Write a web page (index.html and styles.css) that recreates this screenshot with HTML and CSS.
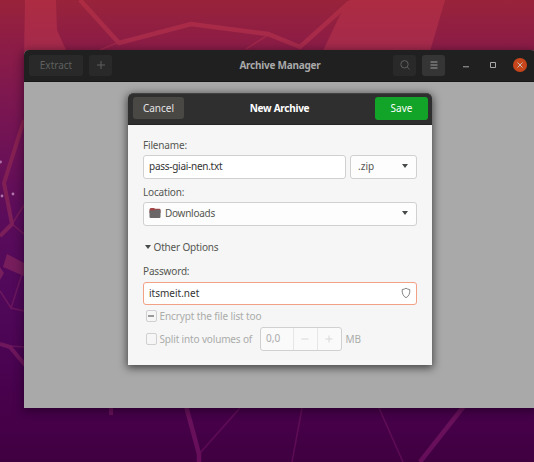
FILE: index.html
```
<!DOCTYPE html>
<html lang="en">
<head>
<meta charset="utf-8">
<title>Archive Manager</title>
<link rel="stylesheet" href="styles.css">
</head>
<body>
<svg class="wallpaper" viewBox="0 0 534 462" aria-hidden="true">
  <defs>
    <linearGradient id="line" gradientUnits="userSpaceOnUse" x1="0" y1="0" x2="0" y2="462">
      <stop offset="0" stop-color="#ad2c42"/>
      <stop offset=".11" stop-color="#a4294c"/>
      <stop offset=".34" stop-color="#842052"/>
      <stop offset=".6" stop-color="#751d5e"/>
      <stop offset="1" stop-color="#650d59"/>
    </linearGradient>
  </defs>
  <g fill="url(#line)">
    <path d="M25 0H56L57 30L66 50V60H24Z"/>
    <path d="M350 0H445L429 55H321L340 15Z"/>
    <path d="M7 254L24 263V276L3 267Z"/>
    <path d="M0 267L4 273L0 280Z"/>
  </g>
  <g fill="none" stroke="url(#line)" stroke-width="4.500">
    <path d="M80 0L119 43L191 24L268 34L300 47L350 2"/>
    <path d="M24 120L4 183L12 224L0 236" stroke-width="4"/>
    <path d="M0 344L10 347L25 365" stroke-width="4"/>
    <path d="M186 406L199 454V462M464 406L420 462" stroke-width="4.500"/>
    <path d="M111 406V415" stroke-width="4"/>
    <path class="thin" d="M100 50L119 42M246 49L268 35M12 224L24 205M12 224L24 234M22 274L11 308L0 291M11 308L24 311M10 346L24 347M240 408L200 453M302 408L292 462M379 408L403 462"/>
  </g>
  <g fill="#b076ac"><circle cx=".5" cy="162" r="1.400"/><circle cx="2" cy="196" r="1.400"/><circle cx="13" cy="194" r="1.400"/></g>
</svg>

<main class="window">
  <header class="titlebar">
    <button class="tool extract">Extract</button>
    <button class="tool add"><svg class="icon" viewBox="0 0 12 12"><path d="M6 2V10M2 6H10"/></svg></button>
    <h1 class="title">Archive Manager</h1>
    <button class="tool search"><svg class="icon" viewBox="0 0 12 12"><circle cx="5.500" cy="5.300" r="3.700"/><path d="M8.200 8L10.500 10.300"/></svg></button>
    <button class="tool menu"><svg class="icon" viewBox="0 0 12 12"><path d="M2.500 3H9.500M2.500 6H9.500M2.500 9H9.500"/></svg></button>
    <span class="control minimize"><svg class="icon" viewBox="0 0 12 12"><path d="M3 7.800H9"/></svg></span>
    <span class="control maximize"><svg class="icon" viewBox="0 0 12 12"><path d="M3.500 3.500H8.500V8.500H3.500Z"/></svg></span>
    <span class="control close"><svg class="icon" viewBox="0 0 12 12"><path d="M3.500 3.500L8.500 8.500M8.500 3.500L3.500 8.500"/></svg></span>
  </header>

  <section class="dialog">
    <header class="dialog-bar">
      <button class="cancel">Cancel</button>
      <h2 class="dialog-title">New Archive</h2>
      <button class="save">Save</button>
    </header>
    <div class="form">
      <div class="label filename">Filename:</div>
      <div class="row">
        <div class="field name"><span class="name-text">pass-giai-nen.txt</span></div>
        <div class="field format"><span>.zip</span><i class="arrow"></i></div>
      </div>
      <div class="label location">Location:</div>
      <div class="field folder">
        <svg class="folder-icon" viewBox="0 0 12 12"><path d="M.5 2.500Q.5 1 2 1H5L6 1.800H10.300Q11.500 1.800 11.500 3V6H.5Z" fill="#a04446"/><path d="M.5 3.600H5L6 2.800H11.500V9.800Q11.500 11 10.300 11H1.700Q.5 11 .5 9.800Z" fill="#6b6768"/></svg>
        <span class="folder-name">Downloads</span><i class="arrow"></i>
      </div>
      <div class="expander"><i class="arrow"></i><span class="expander-text">Other Options</span></div>
      <div class="label password">Password:</div>
      <div class="field secret"><span class="secret-text">itsmeit.net</span>
        <svg class="shield" viewBox="0 0 10 12"><path d="M5 1.200Q3.400 2.400 1.200 2.500C.9 6.200 2.100 9.300 5 10.700C7.900 9.300 9.100 6.200 8.800 2.500Q6.600 2.400 5 1.200Z"/></svg>
      </div>
      <div class="option encrypt"><i class="check mixed"></i><span class="encrypt-text">Encrypt the file list too</span></div>
      <div class="option split"><i class="check"></i><span class="split-text">Split into volumes of</span>
        <div class="spin"><span class="amount">0,0</span><span class="step"><svg class="icon" viewBox="0 0 12 12"><path d="M2.500 6H9.500"/></svg></span><span class="step"><svg class="icon" viewBox="0 0 12 12"><path d="M2.500 6H9.500M6 2.500V9.500"/></svg></span></div>
        <span class="unit">MB</span>
      </div>
    </div>
  </section>
</main>
</body>
</html>
```
FILE: styles.css
```
* { box-sizing: border-box; }
body {
  margin: 0;
  width: 534px;
  height: 462px;
  overflow: hidden;
  padding: 50px 0 0 24px;
  position: relative;
  background: linear-gradient(#98233a 0, #8e1d45 40px, #7c1750 100px, #6b1157 160px, #5b0c5a 215px, #51085a 290px, #490350 370px, #450047 430px, #3f0040 462px);
  font: 10px/14px "Noto Sans", "Open Sans", sans-serif;
  color: #555752;
}
.wallpaper { position: absolute; inset: 0; width: 534px; height: 462px; }
.thin { stroke-width: 1.500px; opacity: .75; }
button { font: inherit; border: 0; padding: 0; margin: 0; }
h1, h2 { margin: 0; font-size: 10px; line-height: 14px; font-weight: 700; text-align: center; flex: 1; }
span { white-space: nowrap; }
.icon { width: 12px; height: 12px; fill: none; stroke: currentColor; stroke-width: 1; display: block; }

.window {
  position: relative;
  width: 512px;
  height: 358px;
  background: #a9a9a9;
  border-radius: 5px 5px 0 0;
  box-shadow: 0 2px 10px 1px rgba(15, 0, 20, .5);
}
.titlebar {
  height: 31.500px;
  display: flex;
  align-items: center;
  padding: 0 9px 0 5px;
  background: #202020;
  border-radius: 5px 5px 0 0;
  border-bottom: 1px solid #171717;
  color: #a9a9a9;
}
.tool {
  height: 21.500px;
  width: 23px;
  display: flex;
  align-items: center;
  justify-content: center;
  background: #292929;
  border-radius: 3px;
  color: #5e605e;
}
.extract { width: 54px; margin-right: 6px; }
.title { margin-left: 17px; margin-right: -38px; letter-spacing: -.24px; }
.menu { background: #353535; color: #a0a0a0; margin-left: 6px; }
.control { width: 14px; height: 14px; display: flex; align-items: center; justify-content: center; }
.minimize { margin-left: 14px; }
.maximize { margin-left: 13px; }
.close { margin-left: 13px; border-radius: 50%; background: #c8461b; color: #c9c0bb; }

.dialog {
  width: 304px;
  height: 272.500px;
  margin: 11px 0 0 104px;
  background: #f6f6f6;
  border-radius: 5px 5px 0 0;
  box-shadow: 0 2px 9px 1px rgba(0, 0, 0, .6);
}
.dialog-bar {
  height: 32.500px;
  display: flex;
  align-items: center;
  padding: 0 4px 1px 5px;
  background: #2f2f2f;
  border-top: 1px solid #424242;
  border-bottom: 1px solid #242424;
  border-radius: 5px 5px 0 0;
  color: #fff;
}
.dialog-title { letter-spacing: -.28px; }
.cancel { width: 51px; height: 22px; border-radius: 3px; background: #4a4845; color: #e5e5e5; }
.save { width: 53px; height: 23px; border-radius: 3px; background: #12a329; color: #fff; }

.form { padding: 13px 15px 0; }
.label { height: 14px; width: max-content; letter-spacing: -.17px; }
.row { display: flex; gap: 4px; margin-top: 3px; }
.field {
  height: 23.500px;
  display: flex;
  align-items: center;
  background: #fdfdfd;
  border: 1px solid #d0d0d0;
  border-radius: 3px;
  padding: 0 8px 1px 5px;
}
.name, .secret { background: #fff; color: #333; }
.name { width: 203px; }
.name-text { letter-spacing: -.27px; }
.format { flex: 1; padding-left: 7px; }
.location { margin-top: 6.500px; }
.folder { margin-top: 3px; }
.folder-icon { width: 12px; height: 12px; margin-right: 4px; }
.folder-name { letter-spacing: -.27px; }
.arrow { width: 0; height: 0; border: 3.500px solid transparent; border-top: 4px solid #474a4a; border-bottom: 0; margin-left: auto; }
.expander { margin-top: 14.500px; height: 14px; display: flex; align-items: center; gap: 2.500px; padding-left: 2px; }
.expander .arrow { margin-left: 0; }
.expander-text { letter-spacing: -.17px; }
.password { margin-top: 10px; }
.secret { margin-top: 3.500px; border-color: #f2a184; padding-right: 5px; }
.shield { width: 10px; height: 12px; margin-left: auto; fill: none; stroke: #858585; stroke-width: 1; }
.option { display: flex; align-items: center; color: #aaacaa; padding-left: 2.500px; }
.encrypt { height: 14px; margin-top: 4px; letter-spacing: -.12px; }
.split { height: 23.500px; margin-top: 4px; }
.check { width: 11.500px; height: 11.500px; border: 1px solid #d0d0d0; border-radius: 2px; margin-right: 2.500px; display: flex; align-items: center; justify-content: center; flex: none; }
.mixed::after { content: ""; width: 6px; height: 1.500px; background: #9a9a9a; }
.split-text { width: 100.500px; letter-spacing: -.15px; }
.spin { width: 81.500px; height: 23.500px; display: flex; border: 1px solid #d0d0d0; border-radius: 3px; margin-right: 4px; background: #fafafa; }
.amount { flex: 1; padding-left: 5px; line-height: 21px; }
.step { width: 24px; display: flex; align-items: center; justify-content: center; border-left: 1px solid #e6e6e6; color: #d8d8d8; }
```
